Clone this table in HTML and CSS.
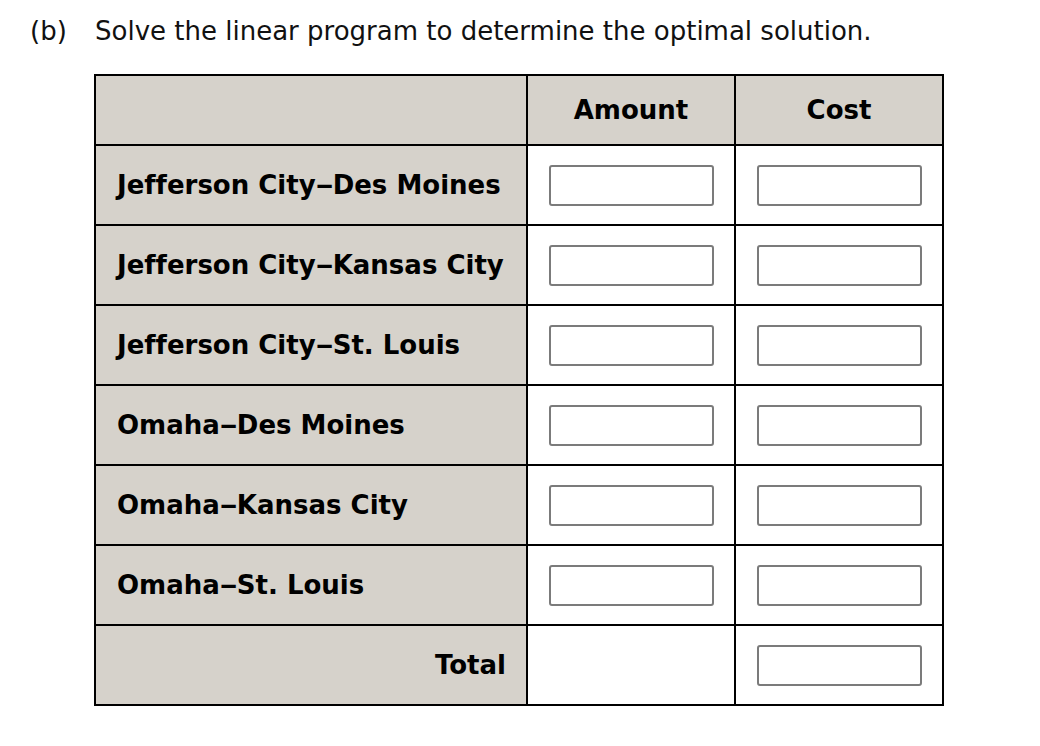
FILE: index.html
```html
<!DOCTYPE html>
<html>
<head>
<meta charset="utf-8">
<link rel="stylesheet" href="styles.css">
</head>
<body>
<div class="question">
  <span class="qlabel">(b)</span>
  <span class="qtext">Solve the linear program to determine the optimal solution.</span>
</div>
<table class="grid">
  <colgroup>
    <col class="c1"><col class="c2"><col class="c3">
  </colgroup>
  <tr class="head">
    <th class="label"></th>
    <th>Amount</th>
    <th>Cost</th>
  </tr>
  <tr class="row"><th class="label">Jefferson City<span class="dash">–</span>Des Moines</th><td><input type="text"></td><td><input type="text"></td></tr>
  <tr class="row"><th class="label">Jefferson City<span class="dash">–</span>Kansas City</th><td><input type="text"></td><td><input type="text"></td></tr>
  <tr class="row"><th class="label">Jefferson City<span class="dash">–</span>St. Louis</th><td><input type="text"></td><td><input type="text"></td></tr>
  <tr class="row"><th class="label">Omaha<span class="dash">–</span>Des Moines</th><td><input type="text"></td><td><input type="text"></td></tr>
  <tr class="row"><th class="label">Omaha<span class="dash">–</span>Kansas City</th><td><input type="text"></td><td><input type="text"></td></tr>
  <tr class="row"><th class="label">Omaha<span class="dash">–</span>St. Louis</th><td><input type="text"></td><td><input type="text"></td></tr>
  <tr class="row"><th class="label total">Total</th><td></td><td><input type="text"></td></tr>
</table>
</body>
</html>
```
FILE: styles.css
```css
html, body {
  margin: 0;
  padding: 0;
  background: #fff;
}
body {
  font-family: "DejaVu Sans", Verdana, sans-serif;
  color: #000;
  font-variant-ligatures: none;
}
.question {
  display: flex;
  padding: 16px 0 0 30px;
  font-size: 26px;
  line-height: 30px;
  color: #111;
}
.qlabel {
  width: 65px;
}
.grid {
  margin: 28px 0 0 94px;
  border-collapse: collapse;
  table-layout: fixed;
  width: 850px;
}
.c1 { width: 432px; }
.c2 { width: 208px; }
.c3 { width: 208px; }
.grid th, .grid td {
  border: 2px solid #000;
  padding: 0;
  text-align: center;
  vertical-align: middle;
}
.grid th {
  background: #d6d2cb;
  font-size: 26px;
  font-weight: bold;
  white-space: nowrap;
}
.dash {
  display: inline-block;
  transform: scaleX(1.4);
  margin: 0 2px;
}
.head { height: 70px; }
.row { height: 80px; }
.grid th.label {
  text-align: left;
  padding-left: 21px;
}
.grid th.total {
  text-align: right;
  padding-right: 20px;
}
.grid td { background: #fff; }
.grid input {
  display: block;
  margin: 0 auto;
  box-sizing: border-box;
  width: 165px;
  height: 41px;
  border: 2px solid #7b7b7b;
  border-radius: 3px;
  background: #fff;
  padding: 0;
}
```
